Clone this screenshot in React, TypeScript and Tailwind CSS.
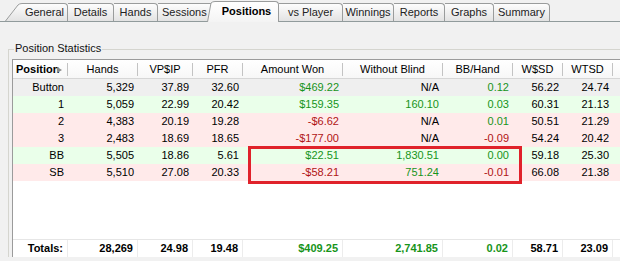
import React from "react";

type Cell = { v: string; c?: "g" | "r" };

const tabs = [
    { label: "General", w: 46 },
    { label: "Details", w: 46 },
    { label: "Hands", w: 44 },
    { label: "Sessions", w: 56 },
    { label: "Positions", w: 64, active: true },
    { label: "vs Player", w: 64 },
    { label: "Winnings", w: 51 },
    { label: "Reports", w: 51 },
    { label: "Graphs", w: 49 },
    { label: "Summary", w: 56 },
];

const headers = ["Position", "Hands", "VP$IP", "PFR", "Amount Won", "Without Blind", "BB/Hand", "W$SD", "WTSD"];

const rows: { bg: string; cells: Cell[] }[] = [
    {
        bg: "bg-[#efefef]",
        cells: [{ v: "Button" }, { v: "5,329" }, { v: "37.89" }, { v: "32.60" }, { v: "$469.22", c: "g" }, { v: "N/A" }, { v: "0.12", c: "g" }, { v: "56.22" }, { v: "24.74" }],
    },
    {
        bg: "bg-[#eaffea]",
        cells: [{ v: "1" }, { v: "5,059" }, { v: "22.99" }, { v: "20.42" }, { v: "$159.35", c: "g" }, { v: "160.10", c: "g" }, { v: "0.03", c: "g" }, { v: "60.31" }, { v: "21.13" }],
    },
    {
        bg: "bg-[#ffeaea]",
        cells: [{ v: "2" }, { v: "4,383" }, { v: "20.19" }, { v: "19.28" }, { v: "-$6.62", c: "r" }, { v: "N/A" }, { v: "0.01", c: "g" }, { v: "50.51" }, { v: "21.29" }],
    },
    {
        bg: "bg-[#ffeaea]",
        cells: [{ v: "3" }, { v: "2,483" }, { v: "18.69" }, { v: "18.65" }, { v: "-$177.00", c: "r" }, { v: "N/A" }, { v: "-0.09", c: "r" }, { v: "54.24" }, { v: "20.42" }],
    },
    {
        bg: "bg-[#eaffea]",
        cells: [{ v: "BB" }, { v: "5,505" }, { v: "18.86" }, { v: "5.61" }, { v: "$22.51", c: "g" }, { v: "1,830.51", c: "g" }, { v: "0.00", c: "g" }, { v: "59.18" }, { v: "25.30" }],
    },
    {
        bg: "bg-[#ffeaea]",
        cells: [{ v: "SB" }, { v: "5,510" }, { v: "27.08" }, { v: "20.33" }, { v: "-$58.21", c: "r" }, { v: "751.24", c: "g" }, { v: "-0.01", c: "r" }, { v: "66.08" }, { v: "21.38" }],
    },
];

const totals: Cell[] = [
    { v: "Totals:" }, { v: "28,269" }, { v: "24.98" }, { v: "19.48" }, { v: "$409.25", c: "g" }, { v: "2,741.85", c: "g" }, { v: "0.02", c: "g" }, { v: "58.71" }, { v: "23.09" },
];

const grid = "grid grid-cols-[55px_70px_55px_50px_100px_100px_70px_50px_50px_1fr]";

const colour = (c?: "g" | "r") => (c === "g" ? "text-[#17941a]" : c === "r" ? "text-[#b01414]" : "text-black");

const Wedge = ({ w, h, id, from, to }: { w: number; h: number; id: string; from: string; to: string }) => (
    <svg width={w} height={h} className="block shrink-0">
        <defs>
            <linearGradient id={id} x1="0" y1="0" x2="0" y2="1">
                <stop offset="0" stopColor={from} />
                <stop offset="1" stopColor={to} />
            </linearGradient>
        </defs>
        <path d={`M0,${h} L${w - 4},2 Q${w - 2.5},0.5 ${w},0.5 L${w},${h} Z`} fill={`url(#${id})`} />
        <path d={`M0.5,${h} L${w - 4},2 Q${w - 2.5},0.5 ${w},0.5`} fill="none" stroke="#9a9c9c" strokeWidth="1" />
    </svg>
);

export default function App() {
    return (
        <div className="relative w-[620px] h-[261px] overflow-hidden bg-[#f1f1f1] font-['Liberation_Sans',Arial,sans-serif] text-[11px] leading-none text-black">
            {/* Tabs */}
            <div className="flex items-end h-[22px] pl-[5px] border-b border-[#919b9c]">
                {tabs.map((t, i) =>
                    t.active ? (
                        <div key={t.label} className="relative z-10 flex items-end ml-[-7px] mb-[-1px]">
                            <Wedge w={8} h={21} id="wa" from="#ffffff" to="#f4f4f4" />
                            <div
                                style={{ width: t.w }}
                                className="h-[21px] flex items-center justify-center pb-[1px] font-bold text-[11px] border-t border-r border-[#9a9c9c] rounded-tr-[4px] bg-linear-to-b from-white to-[#f4f4f4]"
                            >
                                {t.label}
                            </div>
                        </div>
                    ) : (
                        <div key={t.label} className="flex items-end">
                            {i === 0 && <Wedge w={17} h={18} id="wg" from="#fdfdfd" to="#e3e3e3" />}
                            <div
                                style={{ width: t.w }}
                                className={`h-[18px] flex items-center border-t border-r border-[#9a9c9c] rounded-tr-[4px] bg-linear-to-b from-[#fdfdfd] to-[#e3e3e3] text-[#222] ${
                                    t.label === "Sessions" ? "justify-start pl-[4px]" : "justify-center"
                                }`}
                            >
                                {t.label}
                            </div>
                        </div>
                    )
                )}
            </div>

            {/* Group box */}
            <div className="relative mt-[27px] ml-[8px] border-t border-l border-[#d5d5cf] pl-[3px] pt-[9px]">
                <span className="absolute left-[5px] top-[-7px] px-[1px] bg-[#f1f1f1] text-[#111]">Position Statistics</span>

                <div className="w-[620px] bg-white border-t border-l border-[#9b9b9b]">
                    {/* Header */}
                    <div className={`${grid} h-[19px] border-b border-[#d6d6d6] bg-linear-to-b from-white to-[#f7f7f7]`}>
                        {headers.map((h, i) => (
                            <div key={h} className="flex items-center h-full">
                                <div className={`flex-1 flex items-center ${i === 0 ? "justify-start pl-[3px] font-bold" : "justify-center"}`}>
                                    {h}
                                    {i === 0 && (
                                        <svg width="5" height="6" className="ml-[-2px] mt-[1px]">
                                            <path d="M0,0 L5,3 L0,6 Z" fill="#8a8a8a" />
                                        </svg>
                                    )}
                                </div>
                                <div className="w-px h-[13px] bg-[#c3c3c3]" />
                            </div>
                        ))}
                        <div />
                    </div>

                    {/* Rows */}
                    {rows.map((r, ri) => (
                        <div key={ri} className={`${grid} h-[17px] ${r.bg}`}>
                            {r.cells.map((c, ci) => (
                                <div key={ci} className={`flex items-center justify-end pr-[4px] ${colour(c.c)}`}>
                                    {c.v}
                                </div>
                            ))}
                            <div />
                        </div>
                    ))}

                    <div className="h-[58px]" />

                    {/* Totals */}
                    <div className={`${grid} h-[18px] border-t border-[#e6e6e6] font-bold`}>
                        {totals.map((c, ci) => (
                            <div key={ci} className={`flex items-center justify-end pr-[4px] border-r border-[#ececec] ${colour(c.c)}`}>
                                {c.v}
                            </div>
                        ))}
                        <div />
                    </div>
                </div>
            </div>

            {/* Highlight box */}
            <div className="absolute left-[248px] top-[146px] w-[274px] h-[38px] border-[3px] border-[#e0222a]" />
        </div>
    );
}
